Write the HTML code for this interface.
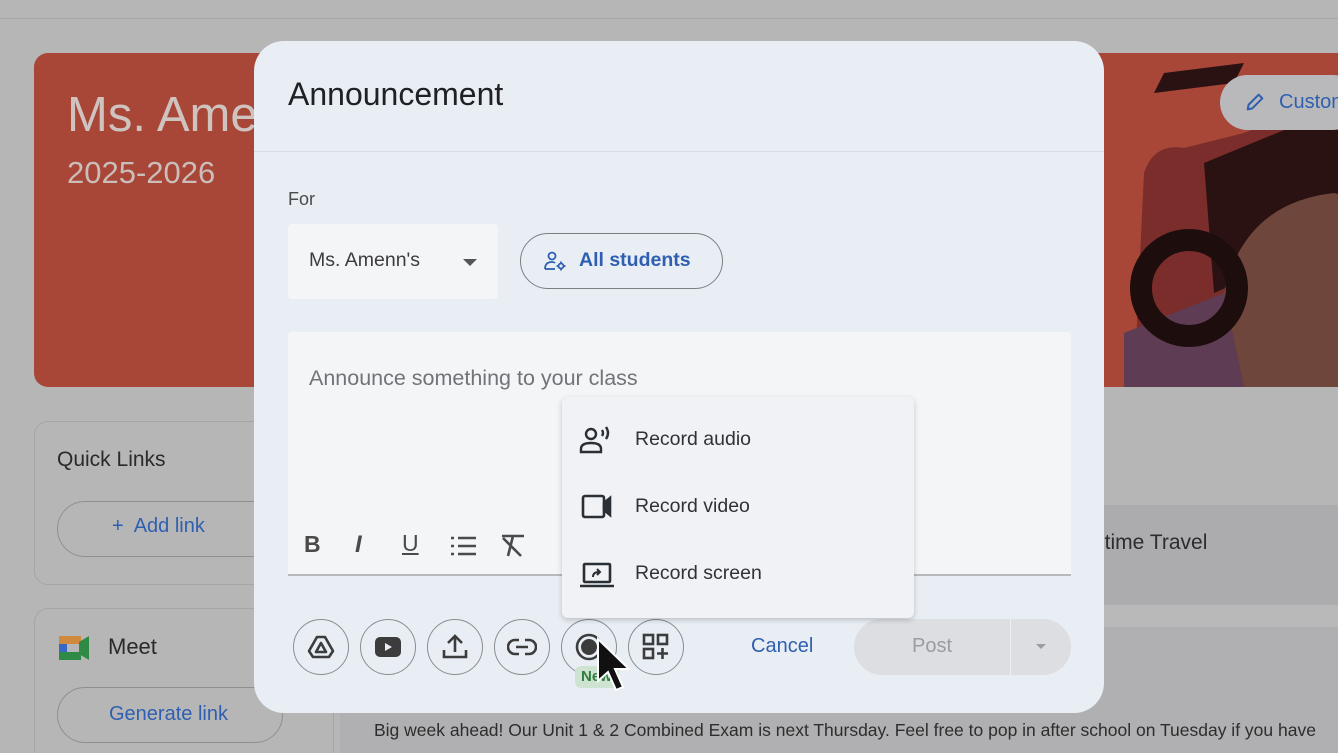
<!DOCTYPE html>
<html><head><meta charset="utf-8"><style>
*{box-sizing:border-box;margin:0;padding:0}
html,body{width:1338px;height:753px;overflow:hidden}
body{background:#b6b6b7;font-family:"Liberation Sans",sans-serif;position:relative}
.abs{position:absolute}
</style></head><body>
<div class="abs" style="left:0;top:18px;width:1338px;height:1px;background:#a8a8a8"></div>
<!-- banner -->
<div class="abs" style="left:34px;top:53px;width:1304px;height:334px;border-radius:14px 0 0 14px;background:#a84638;overflow:hidden">
  <div class="abs" style="left:33px;top:34px;font-size:49px;color:#cfc3bf">Ms. Amenn's</div>
  <div class="abs" style="left:33px;top:102px;font-size:31px;color:#cbbdb9">2025-2026</div>
  <svg class="abs" style="left:1060px;top:0" width="244" height="334" viewBox="0 0 244 334">
    <path d="M50 120 Q60 90 90 95 L150 80 L200 60 L280 40 L280 334 L40 334 Z" fill="#7a2d2a"/>
    <path d="M110 110 L280 40 L280 170 L120 240 Z" fill="#2a1212"/>
    <path d="M130 240 Q150 150 240 140 L280 150 L280 334 L150 334 Z" fill="#6e463c"/>
    <path d="M30 280 L130 240 L150 334 L30 334 Z" fill="#5e3c54"/>
    <circle cx="95" cy="235" r="48" fill="none" stroke="#1d0d0d" stroke-width="22"/>
    <path d="M60 40 L140 30 L150 10 L70 20 Z" fill="#2a1212"/>
  </svg>
  <div class="abs" style="left:1186px;top:22px;width:140px;height:55px;border-radius:28px;background:#b9b9bc"></div>
  <svg class="abs" style="left:1210px;top:38px" width="22" height="22" viewBox="0 0 24 24"><path d="M4 20 L5 15 L16 4 L20 8 L9 19 Z" fill="none" stroke="#2f5fb0" stroke-width="2.2" stroke-linejoin="round"/></svg>
  <div class="abs" style="left:1245px;top:38px;font-size:20px;color:#2f5fb0;white-space:nowrap">Custom</div>
</div>
<!-- Quick links -->
<div class="abs" style="left:34px;top:421px;width:300px;height:164px;border:1px solid #a5a5a5;border-radius:14px"></div>
<div class="abs" style="left:57px;top:448px;font-size:21px;color:#2a2a2a">Quick Links</div>
<div class="abs" style="left:57px;top:501px;width:240px;height:56px;border:1px solid #8f8f8f;border-radius:28px"></div>
<div class="abs" style="left:112px;top:515px;font-size:20px;color:#2f5fb0">+&nbsp; Add link</div>
<div class="abs" style="left:34px;top:608px;width:300px;height:145px;border:1px solid #a5a5a5;border-bottom:none;border-radius:14px 14px 0 0"></div>
<svg class="abs" style="left:58px;top:634px" width="32" height="28" viewBox="0 0 32 28"><rect x="1" y="4" width="8" height="20" fill="#3668c4"/><rect x="1" y="2" width="22" height="8" fill="#d08a3e"/><rect x="1" y="18" width="22" height="8" fill="#2e8a44"/><rect x="9" y="10" width="12" height="8" fill="#b6b6b7"/><path d="M21 8 L31 2 L31 26 L21 20 Z" fill="#2e8a44"/></svg>
<div class="abs" style="left:108px;top:634px;font-size:22px;color:#2a2a2a">Meet</div>
<div class="abs" style="left:57px;top:687px;width:226px;height:56px;border:1px solid #8f8f8f;border-radius:28px"></div>
<div class="abs" style="left:109px;top:703px;font-size:20px;color:#2f5fb0">Generate link</div>
<!-- right cards -->
<div class="abs" style="left:1060px;top:505px;width:278px;height:100px;background:#acacaf"></div>
<div class="abs" style="left:1100px;top:531px;font-size:21px;color:#2d2d2d">itime Travel</div>
<div class="abs" style="left:1060px;top:605px;width:278px;height:22px;background:#b9b9b9"></div>
<div class="abs" style="left:340px;top:627px;width:998px;height:126px;background:#b0b0b2;overflow:hidden">
<div class="abs" style="left:34px;top:93px;font-size:17.5px;color:#2d2d2d;white-space:nowrap">Big week ahead! Our Unit 1 &amp; 2 Combined Exam is next Thursday. Feel free to pop in after school on Tuesday if you have</div>
</div>
<!-- dialog -->
<div class="abs" style="left:254px;top:41px;width:850px;height:672px;border-radius:30px;background:#e9eef5;overflow:hidden">
  <div class="abs" style="left:0;top:110px;width:850px;height:1px;background:#d9dde3"></div>
  <div class="abs" style="left:34px;top:35px;font-size:32px;color:#202124">Announcement</div>
  <div class="abs" style="left:34px;top:148px;font-size:18px;color:#4a4a4a">For</div>
  <div class="abs" style="left:34px;top:183px;width:210px;height:75px;background:#f4f5f7;border-radius:4px"></div>
  <div class="abs" style="left:55px;top:208px;font-size:19.5px;color:#3c3c3c">Ms. Amenn's</div>
  <div class="abs" style="left:209px;top:218px;width:0;height:0;border-left:7px solid transparent;border-right:7px solid transparent;border-top:7px solid #555"></div>
  <div class="abs" style="left:266px;top:192px;width:203px;height:56px;border:1.5px solid #7c7f84;border-radius:28px"></div>
  <svg class="abs" style="left:289px;top:208px" width="24" height="24" viewBox="0 0 24 24" fill="none" stroke="#2f5fb0" stroke-width="1.8"><circle cx="9" cy="7" r="3.5"/><path d="M2 20 Q2 13 9 13 Q11 13 12 14"/><path d="M2 20 H12"/><circle cx="18" cy="17" r="2.5"/><path d="M18 12.5v2M18 19.5v2M13.5 17h2M20.5 17h2"/></svg>
  <div class="abs" style="left:325px;top:208px;font-size:19.5px;color:#2f5fb0;font-weight:bold">All students</div>
  <div class="abs" style="left:34px;top:291px;width:783px;height:244px;background:#f4f5f7;border-radius:4px 4px 0 0;border-bottom:2px solid #b7b9bc"></div>
  <div class="abs" style="left:55px;top:325px;font-size:21.5px;color:#707378">Announce something to your class</div>
  <div class="abs" style="left:50px;top:490px;font-size:23px;font-weight:bold;color:#4a4a4a">B</div>
  <div class="abs" style="left:101px;top:490px;font-size:24px;font-style:italic;font-weight:bold;color:#4a4a4a">I</div>
  <div class="abs" style="left:148px;top:489px;font-size:23px;color:#4a4a4a;text-decoration:underline">U</div>
  <svg class="abs" style="left:195px;top:493px" width="28" height="24" viewBox="0 0 28 24" stroke="#4a4a4a" stroke-width="2.4"><path d="M9 4h18M9 12h18M9 20h18M2 4h3M2 12h3M2 20h3"/></svg>
  <svg class="abs" style="left:245px;top:491px" width="28" height="28" viewBox="0 0 28 28" stroke="#4a4a4a" stroke-width="2.6" fill="none"><path d="M3 4h22M14 4l-5 20M4 6l18 18"/></svg>
  <div class="abs" style="left:39px;top:578px;width:56px;height:56px;border:1.5px solid #8a8d91;border-radius:50%"></div>
  <svg class="abs" style="left:53px;top:592px" width="28" height="28" viewBox="0 0 28 28" fill="none" stroke="#3c3c3c" stroke-width="2.6" stroke-linejoin="round"><path d="M10 4h8l8 14-4 6H6l-4-6z"/><path d="M14 10l5 9H9z"/></svg>
  <div class="abs" style="left:106px;top:578px;width:56px;height:56px;border:1.5px solid #8a8d91;border-radius:50%"></div>
  <svg class="abs" style="left:120px;top:594px" width="28" height="24" viewBox="0 0 28 24"><rect x="1" y="2" width="26" height="20" rx="5" fill="#3c3c3c"/><path d="M11 8l7 4-7 4z" fill="#e9eef5"/></svg>
  <div class="abs" style="left:173px;top:578px;width:56px;height:56px;border:1.5px solid #8a8d91;border-radius:50%"></div>
  <svg class="abs" style="left:188px;top:591px" width="26" height="28" viewBox="0 0 26 28" fill="none" stroke="#3c3c3c" stroke-width="2.6"><path d="M13 20V4M6 11l7-7 7 7M2 18v7h22v-7"/></svg>
  <div class="abs" style="left:240px;top:578px;width:56px;height:56px;border:1.5px solid #8a8d91;border-radius:50%"></div>
  <svg class="abs" style="left:253px;top:595px" width="30" height="22" viewBox="0 0 30 22" fill="none" stroke="#3c3c3c" stroke-width="2.6"><path d="M12 4H8a7 7 0 0 0 0 14h4M18 4h4a7 7 0 0 1 0 14h-4M9 11h12"/></svg>
  <div class="abs" style="left:307px;top:578px;width:56px;height:56px;border:1.5px solid #8a8d91;border-radius:50%"></div>
  <svg class="abs" style="left:320px;top:591px" width="30" height="30" viewBox="0 0 30 30"><circle cx="15" cy="15" r="12" fill="none" stroke="#3c3c3c" stroke-width="2.6"/><circle cx="15" cy="15" r="8" fill="#3c3c3c"/></svg>
  <div class="abs" style="left:374px;top:578px;width:56px;height:56px;border:1.5px solid #8a8d91;border-radius:50%"></div>
  <svg class="abs" style="left:388px;top:592px" width="28" height="28" viewBox="0 0 28 28" fill="none" stroke="#3c3c3c" stroke-width="2.6"><rect x="2" y="2" width="9" height="9"/><rect x="16" y="2" width="9" height="9"/><rect x="2" y="16" width="9" height="9"/><path d="M20.5 15v11M15 20.5h11"/></svg>
  <div class="abs" style="left:321px;top:625px;width:44px;height:22px;background:#cfe3d2;border-radius:6px;font-size:15px;font-weight:bold;color:#2e7d3e;padding:2px 0 0 6px">New</div>
  <svg class="abs" style="left:340px;top:596px" width="40" height="56" viewBox="0 0 40 56"><path d="M4 2 L4 44 L14 35 L22 53 L29 50 L21 32 L35 32 Z" fill="#111" stroke="#fff" stroke-width="2"/></svg>
  <div class="abs" style="left:497px;top:594px;font-size:20px;color:#2f5fb0">Cancel</div>
  <div class="abs" style="left:600px;top:578px;width:217px;height:56px;border-radius:28px;background:#dcdee1"></div>
  <div class="abs" style="left:756px;top:578px;width:1px;height:56px;background:#eceef0"></div>
  <div class="abs" style="left:658px;top:594px;font-size:20px;color:#9a9c9f">Post</div>
  <div class="abs" style="left:782px;top:603px;width:0;height:0;border-left:5px solid transparent;border-right:5px solid transparent;border-top:5px solid #9a9c9f"></div>
</div>
<!-- menu -->
<div class="abs" style="left:562px;top:397px;width:352px;height:221px;background:#f0f2f6;border-radius:6px;box-shadow:0 2px 6px rgba(0,0,0,.2)"></div>
<svg class="abs" style="left:579px;top:425px" width="34" height="30" viewBox="0 0 34 30" fill="none" stroke="#2a2f36" stroke-width="2.4"><circle cx="12" cy="9" r="5"/><path d="M2 27v-3q0-6 10-6t10 6v3z"/><path d="M23 5q2 3 0 6M27 2q4 6 0 12"/></svg>
<div class="abs" style="left:635px;top:428px;font-size:19.5px;color:#303236">Record audio</div>
<svg class="abs" style="left:580px;top:493px" width="34" height="28" viewBox="0 0 34 28" fill="none" stroke="#2a2f36" stroke-width="2.6"><rect x="3" y="3" width="21" height="21" rx="2"/><path d="M24 10l6-5v17l-6-5z" fill="#2a2f36"/></svg>
<div class="abs" style="left:635px;top:495px;font-size:19.5px;color:#303236">Record video</div>
<svg class="abs" style="left:579px;top:561px" width="36" height="28" viewBox="0 0 36 28" fill="none" stroke="#2a2f36" stroke-width="2.6"><rect x="5" y="3" width="26" height="18" rx="1"/><path d="M1 25h34"/><path d="M14 16q0-5 6-5M18 8l3 3-3 3" stroke-width="2"/></svg>
<div class="abs" style="left:635px;top:562px;font-size:19.5px;color:#303236">Record screen</div>
</body></html>
